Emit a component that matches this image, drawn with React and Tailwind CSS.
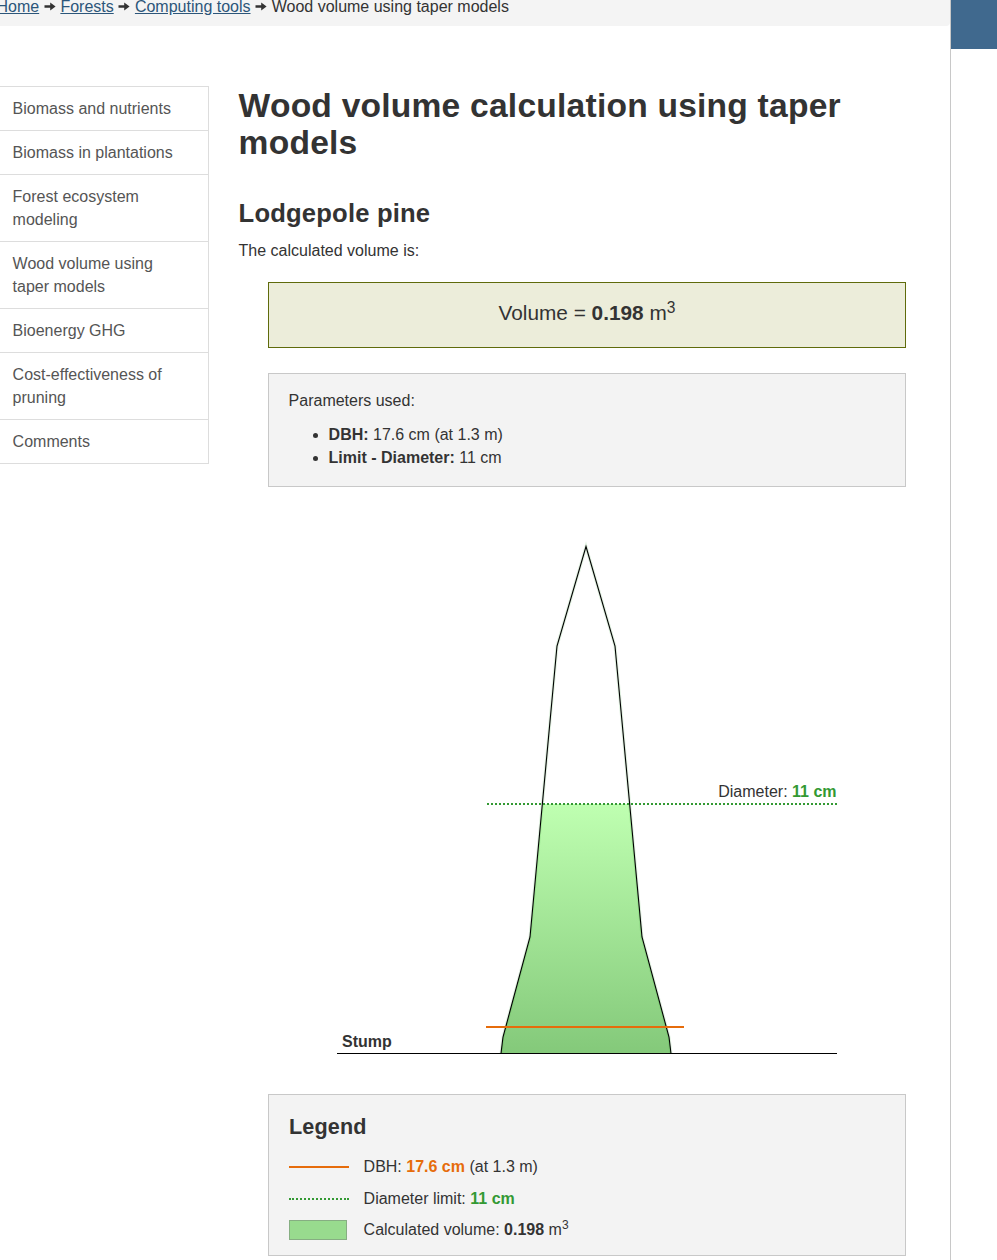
const navItems = [
  'Biomass and nutrients',
  'Biomass in plantations',
  'Forest ecosystem modeling',
  'Wood volume using taper models',
  'Bioenergy GHG',
  'Cost-effectiveness of pruning',
  'Comments',
];

function Arrow() {
  return (
    <svg className="mr-[4.7px] ml-[4.5px] h-[9px] w-[12px] shrink-0" viewBox="0 0 12 9" fill="#333">
      <path d="M.5 3.2H6.2V.4L11.6 4.5 6.2 8.6V5.8H.5Z" />
    </svg>
  );
}

function Crumb({ children }) {
  return (
    <>
      <a className="text-[#2c567a] underline" href="#">{children}</a>
      <Arrow />
    </>
  );
}

function TreeDiagram() {
  const outline = 'M164 513.5L166 497L193 397L220 106L249 6.5L278 106L305 397L332 497L334 513.5';
  return (
    <svg className="mt-[53px] ml-[98px] block h-[514px] w-[500px] text-base" viewBox="0 0 500 514">
      <defs>
        <linearGradient id="wood" x1="0" y1="0" x2="0" y2="1">
          <stop offset="0" stopColor="#bfffb1" />
          <stop offset="1" stopColor="#84c97a" />
        </linearGradient>
      </defs>
      <path d="M205.5 264H292.5L305 397L332 497L334 513H164L166 497L193 397Z" fill="url(#wood)" />
      <path d={outline} fill="none" stroke="#2ca02c" strokeOpacity=".15" strokeWidth="3" />
      <path d={outline} fill="none" stroke="#000" strokeWidth="1.1" />
      <path d="M150 264H500" stroke="#339933" strokeWidth="2" strokeDasharray="2 2" />
      <path d="M149 487H347" stroke="#e66c0b" strokeWidth="2" />
      <path d="M0 513.5H500" stroke="#000" />
      <text x="5" y="507" fontWeight="700" fill="#333">Stump</text>
      <text x="499.5" y="257" textAnchor="end" fill="#333">
        Diameter: <tspan fontWeight="700" fill="#339933">11 cm</tspan>
      </text>
    </svg>
  );
}

export default function App() {
  return (
    <div className="flex h-[1260px] w-[997px] overflow-hidden bg-white font-['Liberation_Sans',Arial,sans-serif] text-base leading-[23px] text-[#333]">
      <div className="w-[951px] shrink-0 border-r border-[#c8c8c8]">
        <div className="h-[26px] rounded-br bg-[#f4f4f4]">
          <nav className="-ml-[3.5px] flex h-[13px] items-center whitespace-nowrap">
            <Crumb>Home</Crumb>
            <Crumb>Forests</Crumb>
            <Crumb>Computing tools</Crumb>
            <span>Wood volume using taper models</span>
          </nav>
        </div>

        <div className="flex items-start pt-[60px]">
          <ul className="w-[209px] shrink-0 border-t border-r border-[#ddd]">
            {navItems.map((item) => (
              <li key={item} className="border-b border-[#ddd] py-[10px] pr-[30px] pl-[12.6px] text-[#555]">
                {item}
              </li>
            ))}
          </ul>

          <main className="ml-[29.6px] w-[667.4px]">
            <h1 className="pt-px text-[33.6px] leading-[37px] font-bold tracking-[0.22px]">
              Wood volume calculation using taper models
            </h1>
            <h2 className="mt-[38px] text-[25.6px] leading-[28px] font-bold tracking-[0.18px]">Lodgepole pine</h2>
            <p className="mt-3">The calculated volume is:</p>

            <div className="ml-[29.4px]">
              <div className="mt-5 h-[66px] w-[638px] border border-[#5f6b0b] bg-[#ecedda] pt-[15px] text-center text-[20.8px] leading-[30px]">
                Volume = <strong>0.198</strong> m<sup className="-top-[0.42em] text-[75%]">3</sup>
              </div>

              <div className="mt-[25px] h-[114px] w-[638px] border border-[#c8c8c8] bg-[#f3f3f3] pr-5 pl-[19.6px] pt-[15px]">
                <p>Parameters used:</p>
                <ul className="mt-[11px] list-disc pl-10">
                  <li><strong>DBH:</strong> 17.6 cm (at 1.3 m)</li>
                  <li><strong>Limit - Diameter:</strong> 11 cm</li>
                </ul>
              </div>

              <div className="-ml-[29px]">
                <TreeDiagram />
              </div>

              <section className="mt-10 h-[162px] w-[638px] border border-[#c8c8c8] bg-[#f3f3f3] px-5 pt-5">
                <h3 className="text-[21.6px] leading-6 font-bold tracking-[0.15px]">Legend</h3>
                <div className="mt-4 flex h-[23px] items-center gap-[14.6px]">
                  <span className="w-[60px] border-t-2 border-[#e66c0b]" />
                  <span>DBH: <strong className="text-[#e66c0b]">17.6 cm</strong> (at 1.3 m)</span>
                </div>
                <div className="mt-[9px] flex h-[23px] items-center gap-[14.6px]">
                  <span className="w-[60px] border-t-2 border-dotted border-[#339933]" />
                  <span>Diameter limit: <strong className="text-[#339933]">11 cm</strong></span>
                </div>
                <div className="mt-2 flex h-[23px] items-center">
                  <span className="mr-[16.6px] h-5 w-[58px] border border-[#86ae82] bg-[#98db8e]" />
                  <span>Calculated volume: <strong>0.198</strong> m<sup className="text-[75%]">3</sup></span>
                </div>
              </section>
            </div>
          </main>
        </div>
      </div>
      <div className="h-[49px] flex-1 bg-[#40698e]" />
    </div>
  );
}
